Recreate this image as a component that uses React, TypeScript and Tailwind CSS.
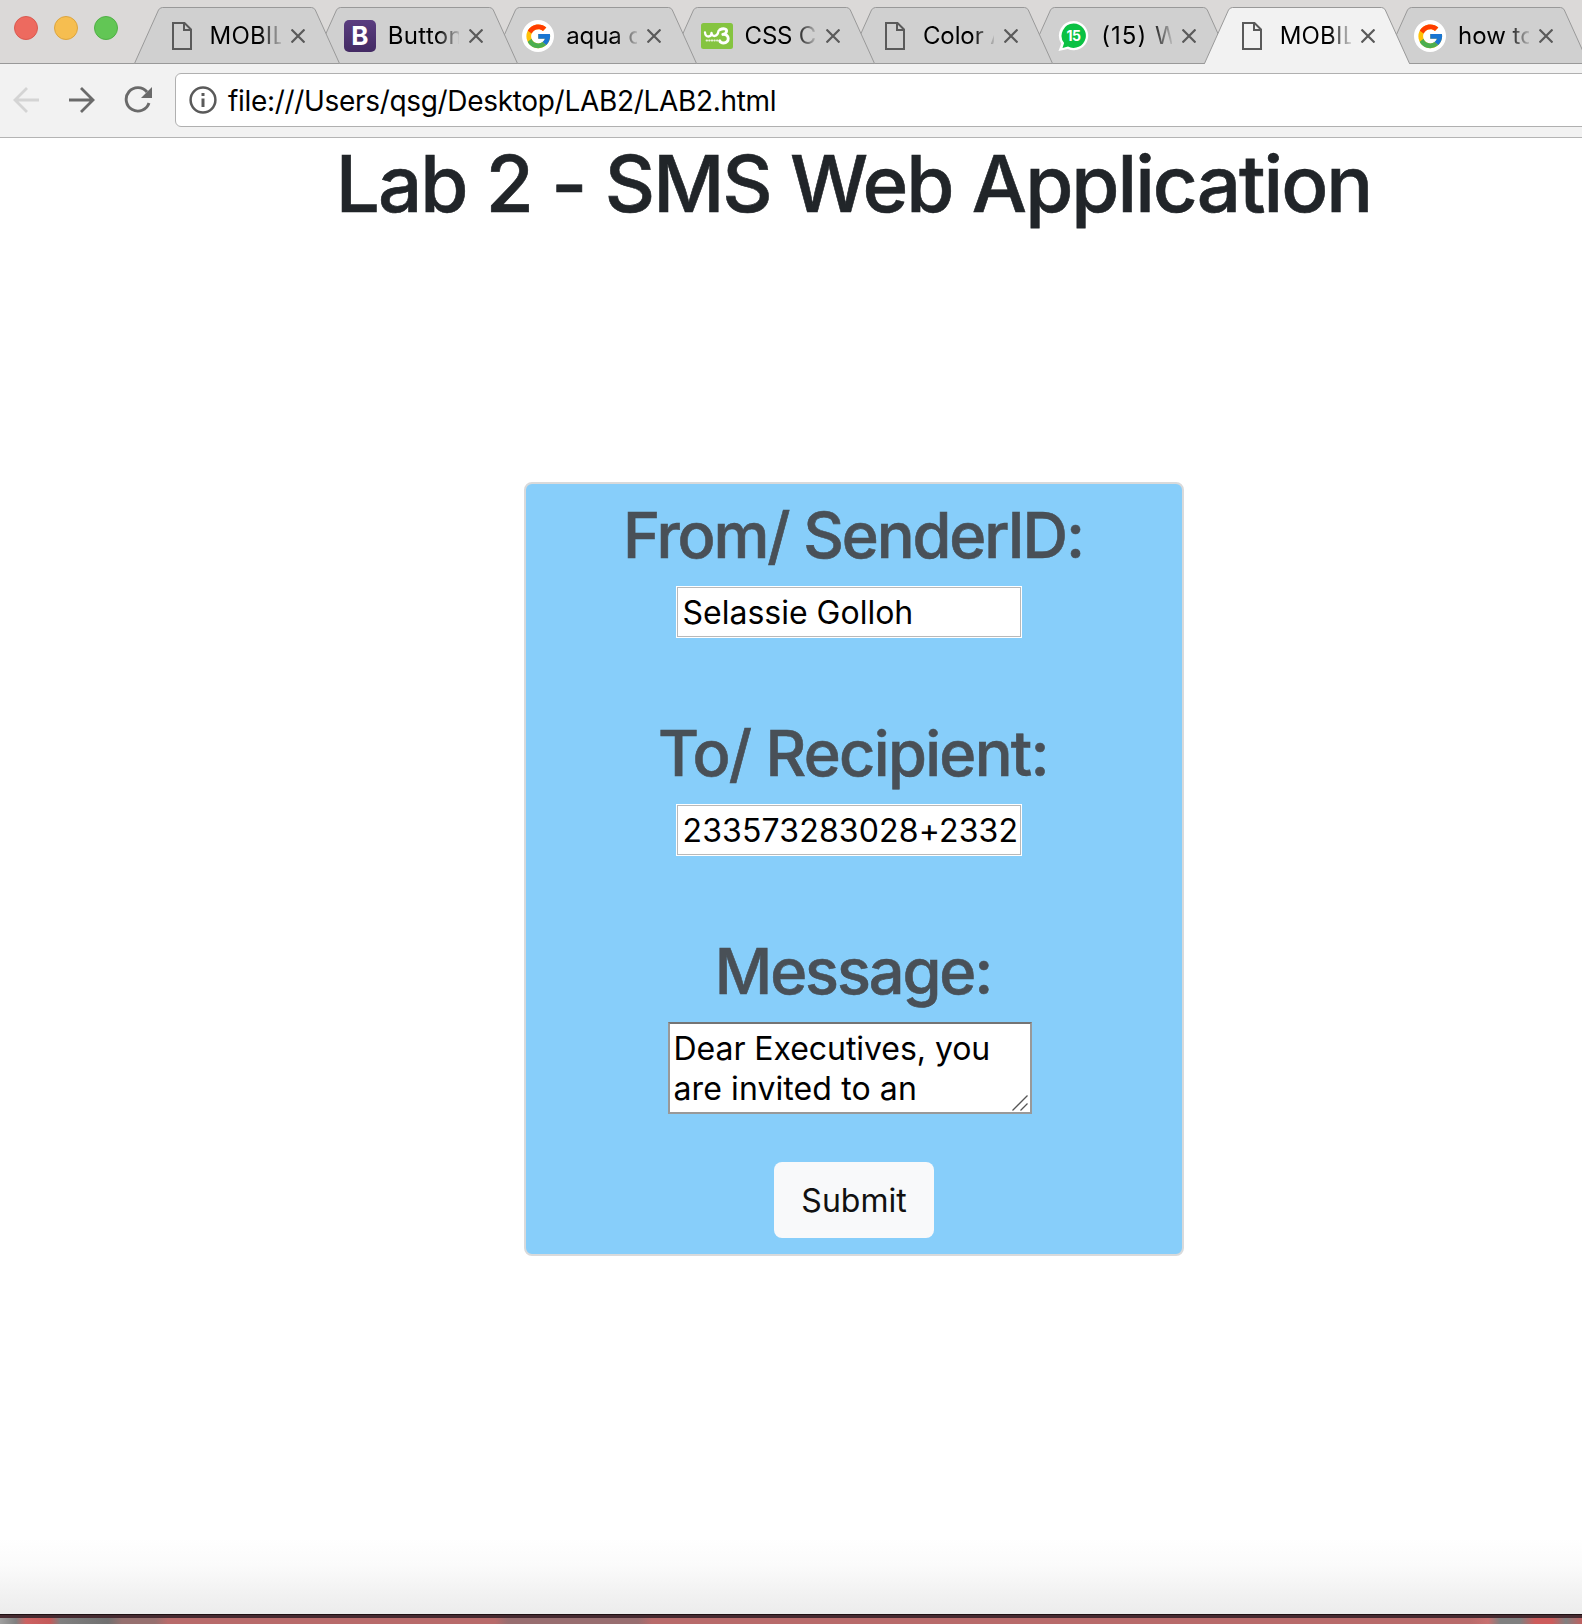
import React from "react";
import { FcGoogle } from "react-icons/fc";

type IconKind = "doc" | "bootstrap" | "google" | "w3" | "whatsapp";

const TABS: { title: string; icon: IconKind; active?: boolean; tracking: string; z: string }[] = [
  { title: "MOBILE", icon: "doc", tracking: "tracking-[0.2px]", z: "z-[8]" },
  { title: "Buttons", icon: "bootstrap", tracking: "tracking-[0.3px]", z: "z-[7]" },
  { title: "aqua co", icon: "google", tracking: "tracking-[-0.1px]", z: "z-[6]" },
  { title: "CSS Co", icon: "w3", tracking: "tracking-[-0.2px]", z: "z-[5]" },
  { title: "Color A", icon: "doc", tracking: "tracking-[-0.1px]", z: "z-[4]" },
  { title: "(15) W", icon: "whatsapp", tracking: "tracking-[1px]", z: "z-[3]" },
  { title: "MOBILE", icon: "doc", active: true, tracking: "tracking-[0.2px]", z: "z-[10]" },
  { title: "how to", icon: "google", tracking: "tracking-[0px]", z: "z-[1]" },
];

function TabIcon({ kind }: { kind: IconKind }) {
  if (kind === "doc")
    return (
      <svg width="32" height="32" viewBox="0 0 32 32" fill="none" stroke="#5a5a5a" strokeWidth="2">
        <path d="M7 3h11.500l6.500 6.500V29H7z" />
        <path d="M18 3v7h7" />
      </svg>
    );
  if (kind === "bootstrap")
    return (
      <span className="flex h-8 w-8 items-center justify-center rounded-[5px] bg-gradient-to-b from-[#5a3d80] to-[#432a63] text-[26px] leading-none font-bold text-white">
        B
      </span>
    );
  if (kind === "google")
    return (
      <span className="flex h-8 w-8 items-center justify-center rounded-full bg-white">
        <FcGoogle size={28.5} />
      </span>
    );
  if (kind === "w3")
    return (
      <svg width="32" height="32" viewBox="0 0 32 32" fill="none" stroke="#fff" strokeLinecap="round" strokeLinejoin="round">
        <rect y="3" width="32" height="26" rx="2.500" fill="#85c440" stroke="none" />
        <path d="M4 12.500c0.500 5.500 6.500 5 6.500 0.500 0.500 4.500 6 4 7-2" strokeWidth="2.300" />
        <path d="M18.800 9.800c3-1.800 7.500-1.400 6.700 1.700-0.400 1.800-2 2.600-3.700 3 7-1 7.200 8.500 0.700 8.500-2 0-3.300-0.800-3.800-2.200" strokeWidth="2.900" />
        <path d="M5.500 20.500h11" strokeWidth="1.800" strokeDasharray="0.600 2" opacity="0.800" />
      </svg>
    );
  return (
    <svg width="32" height="32" viewBox="0 0 32 32">
      <path d="M16.600 1a14.600 14.600 0 1 1-5.800 28L1.500 31 4.300 23.500A14.600 14.600 0 0 1 16.600 1z" fill="#fff" />
      <path d="M16.600 3.500a12.200 12.200 0 1 1-5.600 23l-5.500 1.600 1.600-5A12.200 12.200 0 0 1 16.600 3.500z" fill="#0ac143" />
      <text x="16.400" y="20.800" fontSize="14" fontWeight="700" letterSpacing="-0.500" fill="#fff" textAnchor="middle" fontFamily="Inter, sans-serif">
        15
      </text>
    </svg>
  );
}

function Tab({ tab }: { tab: (typeof TABS)[number] }) {
  return (
    <div className={`relative -mr-[27.650px] h-[64px] w-[206px] shrink-0 ${tab.z}`}>
      <svg className="absolute inset-0" width="206" height="64" viewBox="0 0 206 64">
        <path
          d="M0.500 63.500L24.500 10Q26 7.500 28.500 7.500H177.500Q180 7.500 181.300 10L205.500 63.500"
          fill={tab.active ? "#f2f2f2" : "#d0d0d0"}
          stroke="#999"
        />
        <path d="M1 63.500H205" stroke={tab.active ? "#f2f2f2" : "#999"} />
      </svg>
      <div className="relative flex h-[57px] items-center pt-[15px] pl-[31.500px]">
        <TabIcon kind={tab.icon} />
        <span
          className={`ml-[12px] w-[71px] overflow-hidden text-[24px] leading-[30px] whitespace-nowrap text-black [mask-image:linear-gradient(to_right,black_70%,transparent_104%)] ${tab.tracking}`}
        >
          {tab.title}
        </span>
        <svg className="ml-[10px]" width="14" height="14" viewBox="0 0 14 14" stroke="#5a5a5a" strokeWidth="2.200">
          <path d="M0.500 0.500l13 13M13.500 0.500l-13 13" />
        </svg>
      </div>
    </div>
  );
}

function TextInput({ value, tracking = "" }: { value: string; tracking?: string }) {
  return (
    <div className="-ml-[10px] h-[52px] w-[346px] border border-white bg-white">
      <div className="h-[50px] border border-[#b9b9b9] pr-[2px] pl-[4.500px]">
        <div className={`overflow-hidden text-[32px] leading-[50px] whitespace-nowrap text-black ${tracking}`}>{value}</div>
      </div>
    </div>
  );
}

function FieldLabel({ text, className }: { text: string; className: string }) {
  return (
    <h2
      className={`h-[89px] pr-[2px] text-[63px] leading-[76px] font-medium whitespace-nowrap text-[#495057] [-webkit-text-stroke:0.6px_#495057] ${className}`}
    >
      {text}
    </h2>
  );
}

export default function App() {
  return (
    <div className="flex h-[1624px] w-[1582px] flex-col overflow-hidden bg-white font-['Inter',sans-serif] [font-feature-settings:'calt'_0]">
      <div className="flex h-[64px] shrink-0 border-b border-[#999] bg-[#dbd9d8]">
        <div className="flex w-[134px] shrink-0 gap-4 pt-4 pl-[14px]">
          <span className="h-6 w-6 rounded-full border border-[#d95a50] bg-[#ed6a5f]" />
          <span className="h-6 w-6 rounded-full border border-[#dca53f] bg-[#f6be50]" />
          <span className="h-6 w-6 rounded-full border border-[#50b046] bg-[#62c655]" />
        </div>
        {TABS.map((t, i) => (
          <Tab key={i} tab={t} />
        ))}
      </div>
      <div className="flex h-[74px] shrink-0 border-b border-[#b4b4b4] bg-[#f2f2f2] pt-[9px]">
        <svg className="mt-[14px] ml-[13px]" width="26" height="26" viewBox="0 0 26 26" fill="none" stroke="#d4d4d4" strokeWidth="2.800">
          <path d="M26 13H2M14 1L2 13l12 12" />
        </svg>
        <svg className="mt-[14px] ml-[30px]" width="26" height="26" viewBox="0 0 26 26" fill="none" stroke="#6a6a6a" strokeWidth="2.800">
          <path d="M0 13H24M12 1l12 12-12 12" />
        </svg>
        <svg className="mt-[13px] ml-[29px]" width="28" height="28" viewBox="0 0 28 28" fill="none">
          <path d="M23 6A11.700 11.700 0 1 0 25 17" stroke="#6a6a6a" strokeWidth="2.900" />
          <path d="M28 1v11H17z" fill="#6a6a6a" />
        </svg>
        <div className="-mr-4 ml-[23px] flex h-[54px] flex-1 items-center rounded-[6px] border border-[#b0b0b0] bg-white pl-[13px]">
          <svg width="28" height="28" viewBox="0 0 28 28" fill="none">
            <circle cx="14" cy="14" r="12.400" stroke="#5a5a5a" strokeWidth="2.500" />
            <path d="M14 12.500V21M14 7v3" stroke="#5a5a5a" strokeWidth="3" />
          </svg>
          <span className="ml-[11px] pt-[2px] text-[28px] leading-none tracking-[-0.320px] whitespace-nowrap text-black">
            file:///Users/qsg/Desktop/LAB2/LAB2.html
          </span>
        </div>
      </div>
      <main className="flex flex-1 flex-col items-center pl-[126px]">
        <h1 className="h-[344px] pr-[1px] text-[78px] leading-[92px] font-medium tracking-[-2px] whitespace-nowrap text-[#212529] [-webkit-text-stroke:0.6px_#212529] [word-spacing:0.6px]">
          Lab 2 - SMS Web Application
        </h1>
        <section className="flex h-[774px] w-[660px] flex-col items-center rounded-[8px] border-2 border-[#d9dadb] bg-[#87cefa]">
          <FieldLabel text="From/ SenderID:" className="mt-[13px] tracking-[-2.1px]" />
          <TextInput value="Selassie Golloh" />
          <FieldLabel text="To/ Recipient:" className="mt-[77px] tracking-[-1.7px]" />
          <TextInput value="233573283028+2332" tracking="tracking-[0.15px]" />
          <FieldLabel text="Message:" className="mt-[77px] tracking-[-2.1px]" />
          <div className="relative -ml-[8px] h-[92px] w-[364px] border-2 border-[#999] border-t-[#747474] bg-white pt-[5px] pl-[3.500px] text-[32px] leading-[40px] whitespace-nowrap text-black">
            <div className="tracking-[-0.05px]">Dear Executives, you</div>
            <div className="tracking-[0.1px]">are invited to an</div>
            <svg className="absolute right-[2px] bottom-[1px]" width="16" height="16" viewBox="0 0 16 16" stroke="#555" strokeWidth="1.300">
              <path d="M0.500 15.500l15-15M8.500 15.500l7-7" />
            </svg>
          </div>
          <button className="mt-[48px] h-[76px] w-[160px] rounded-[8px] bg-[#f8f9fa] pt-[2px] text-[32px] leading-none text-[#111]">Submit</button>
        </section>
      </main>
      <div className="h-[84px] shrink-0 bg-[linear-gradient(to_bottom,#fff_10%,#fbfbfb_42%,#f2f2f2_75%,#ececec_100%)]" />
      <div className="h-1 shrink-0 border-t border-[#1e1012] bg-[#452a30]" />
      <div className="h-[6px] shrink-0 bg-[linear-gradient(to_right,#a0a0a0_0px,#808080_16px,#cc6262_26px,#c45a5a_50px,#808080_60px,#707070_108px,#96706f_122px,#96706f_155px,#b86b6b_168px,#b86b6b_495px,#986e70_508px,#986e70_638px,#b86b6b_652px,#b86b6b_1470px,#c87070_1488px,#808080_1500px,#808080_1520px,#cc5c5c_1535px,#cc5c5c_1552px,#808080_1566px,#c06060_1582px)]" />
    </div>
  );
}
